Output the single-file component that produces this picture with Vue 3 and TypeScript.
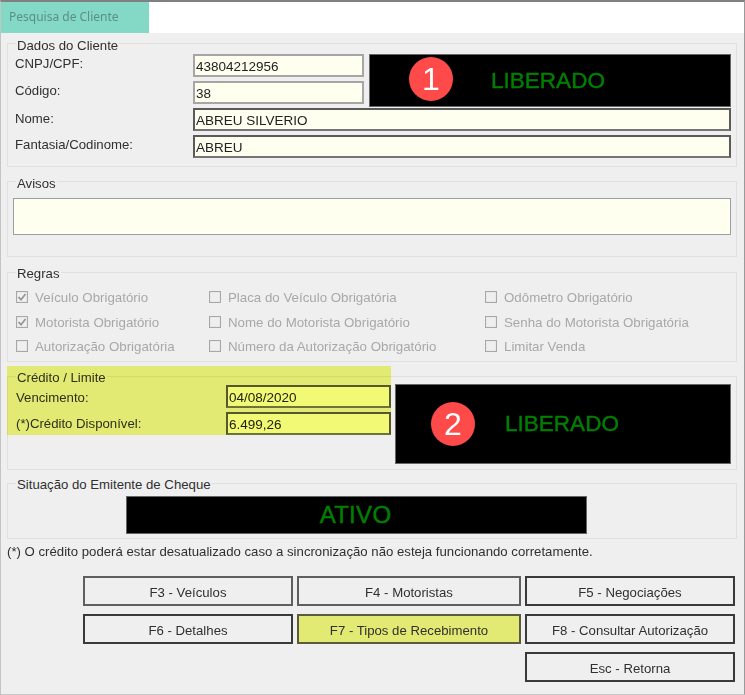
<script setup lang="ts">
interface Check { label: string; checked: boolean }
const checks: Check[] = [
  { label: 'Veículo Obrigatório', checked: true },
  { label: 'Placa do Veículo Obrigatória', checked: false },
  { label: 'Odômetro Obrigatório', checked: false },
  { label: 'Motorista Obrigatório', checked: true },
  { label: 'Nome do Motorista Obrigatório', checked: false },
  { label: 'Senha do Motorista Obrigatória', checked: false },
  { label: 'Autorização Obrigatória', checked: false },
  { label: 'Número da Autorização Obrigatório', checked: false },
  { label: 'Limitar Venda', checked: false },
]
const buttons = [
  { label: 'F3 - Veículos', cls: 'soft' },
  { label: 'F4 - Motoristas', cls: 'soft' },
  { label: 'F5 - Negociações', cls: '' },
  { label: 'F6 - Detalhes', cls: '' },
  { label: 'F7 - Tipos de Recebimento', cls: 'active' },
  { label: 'F8 - Consultar Autorização', cls: '' },
  { label: 'Esc - Retorna', cls: 'last' },
]
</script>

<template>
  <div class="win">
    <div class="tabbar"><div class="tab">Pesquisa de Cliente</div></div>

    <section class="group g-dados">
      <span class="legend">Dados do Cliente</span>
      <div class="dados-grid">
        <label class="lb up">CNPJ/CPF:</label>
        <div class="field light">43804212956</div>
        <div class="status s1"><span class="badge b1">1</span>LIBERADO</div>
        <label class="lb up">Código:</label>
        <div class="field light">38</div>
        <label class="lb">Nome:</label>
        <div class="field wide dark">ABREU SILVERIO</div>
        <label class="lb up">Fantasia/Codinome:</label>
        <div class="field wide dark">ABREU</div>
      </div>
    </section>

    <section class="group g-avisos">
      <span class="legend">Avisos</span>
      <div class="memo"></div>
    </section>

    <section class="group g-regras">
      <span class="legend raised">Regras</span>
      <div class="checks">
        <div v-for="c in checks" :key="c.label" class="chk">
          <svg class="box" width="12" height="12" viewBox="0 0 12 12">
            <rect x="0.5" y="0.5" width="11" height="11" fill="none" stroke="#a8a8a8" stroke-width="1.2" />
            <path v-if="c.checked" d="M2.5 6 L5 8.7 L9.5 3" fill="none" stroke="#949494" stroke-width="1.7" />
          </svg>
          <span class="chk-text">{{ c.label }}</span>
        </div>
      </div>
    </section>

    <section class="group g-credito">
      <span class="legend raised">Crédito / Limite</span>
      <div class="credito-grid">
        <label class="lb first">Vencimento:</label>
        <div class="field dark">04/08/2020</div>
        <div class="status s2"><span class="badge b2">2</span>LIBERADO</div>
        <label class="lb">(*)Crédito Disponível:</label>
        <div class="field dark">6.499,26</div>
      </div>
      <div class="marker"></div>
    </section>

    <section class="group g-situacao">
      <span class="legend">Situação do Emitente de Cheque</span>
      <div class="status s3">ATIVO</div>
    </section>

    <p class="note">(*) O crédito poderá estar desatualizado caso a sincronização não esteja funcionando corretamente.</p>

    <div class="buttons">
      <button v-for="b in buttons" :key="b.label" class="btn" :class="b.cls">{{ b.label }}</button>
    </div>
  </div>
</template>

<style scoped>
.win {
  position: relative;
  width: 745px;
  height: 695px;
  box-sizing: border-box;
  overflow: hidden;
  background: #efefef;
  border-top: 2px solid #808080;
  border-left: 1px solid #c4c4c4;
  border-right: 1px solid #9a9a9a;
  border-bottom: 1px solid #c8c8c8;
  font-family: "Liberation Sans", Arial, sans-serif;
  font-size: 13.2px;
  color: #303030;
}
.tabbar { height: 31px; background: #fff; }
.tab {
  width: 148px;
  height: 31px;
  line-height: 30px;
  padding-left: 8px;
  box-sizing: border-box;
  background: #84d8c6;
  color: #5c8f86;
  font-family: "Noto Sans", sans-serif;
  font-size: 12px;
}
.group {
  position: relative;
  box-sizing: border-box;
  width: 730px;
  margin-left: 6px;
  border: 1px solid #e0e0e0;
}
.legend {
  position: absolute;
  left: 8px;
  top: -6px;
  padding: 0 1px;
  line-height: 16px;
  background: #efefef;
  white-space: nowrap;
}
.legend.raised { top: -7px; }
.g-situacao .legend { top: -7px; }

.g-dados { margin-top: 10px; height: 124px; padding: 10px 0 0 7px; }
.dados-grid {
  display: grid;
  grid-template-columns: 178px 171px 367px;
  grid-auto-rows: 27px;
}
.lb { align-self: start; white-space: nowrap; line-height: 16px; margin-top: 3px; }
.lb.up { margin-top: 2px; }
.field {
  box-sizing: border-box;
  height: 23px;
  padding-left: 1px;
  background: #fffff0;
  color: #222;
  font-size: 13.5px;
  line-height: 21px;
  white-space: nowrap;
}
.field.light { border: 2px solid #a6a6a6; }
.field.dark { border: 2px solid #5a5a5a; border-bottom-color: #757575; }
.field.wide { grid-column: 2 / 4; width: 538px; }
.status {
  position: relative;
  box-sizing: border-box;
  display: flex;
  align-items: center;
  justify-content: center;
  background: #000;
  border: 1px solid #666;
  color: #008000;
  font-size: 22.5px;
  -webkit-text-stroke: 0.4px #008000;
}
.s1 { grid-column: 3; grid-row: 1 / 3; width: 362px; height: 53px; margin-left: 5px; padding-right: 4px; }
.s2 { grid-column: 3; grid-row: 1 / 4; width: 336px; height: 80px; margin-left: 4px; padding-right: 2px; }
.s3 { width: 461px; height: 38px; margin-left: 118px; font-size: 24px; letter-spacing: 0.3px; padding-right: 2px; }
.badge {
  position: absolute;
  width: 44px;
  height: 44px;
  border-radius: 50%;
  background: #ff4a4a;
  color: #fff;
  font-size: 32px;
  line-height: 44px;
  text-align: center;
  -webkit-text-stroke: 0;
}
.b1 { left: 39px; top: 2px; }
.b2 { left: 35px; top: 17px; }

.g-avisos { margin-top: 14px; height: 76px; padding: 16px 0 0 5px; }
.memo {
  box-sizing: border-box;
  width: 718px;
  height: 37px;
  background: #fffff0;
  border: 1px solid #9aa0a8;
}

.g-regras { margin-top: 15px; height: 90px; padding: 18px 0 0 8px; }
.checks {
  display: grid;
  grid-template-columns: 193px 276px 1fr;
  grid-auto-rows: 24.5px;
}
.chk { display: flex; align-items: flex-start; color: #a8a8a8; white-space: nowrap; line-height: 12px; font-size: 13.3px; }
.chk-text { padding-top: 1px; }
.box { flex: none; margin-right: 7px; }

.g-credito { margin-top: 14px; height: 94px; padding: 7px 0 0 8px; }
.credito-grid {
  display: grid;
  grid-template-columns: 210px 165px 340px;
  grid-auto-rows: 27px;
}
.credito-grid .lb { margin-top: 5px; }
.credito-grid .lb.first { margin-top: 6px; }
.credito-grid .field { margin-top: 1px; }
.marker {
  position: absolute;
  left: -1px;
  top: -11px;
  width: 384px;
  height: 69px;
  background: #f2fa7c;
  mix-blend-mode: multiply;
  pointer-events: none;
}

.g-situacao { margin-top: 13px; height: 56px; padding-top: 12px; }
.note {
  margin: 5px 0 0 6px;
  line-height: 16px;
  white-space: nowrap;
}
.buttons {
  display: grid;
  grid-template-columns: 210px 224px 210px;
  grid-auto-rows: 30px;
  gap: 8px 4px;
  margin: 16px 0 0 82px;
}
.btn {
  box-sizing: border-box;
  background: #efefef;
  border: 2px solid #3a3a3a;
  border-radius: 0;
  padding: 2px 0 0;
  font: inherit;
  color: #303030;
}
.btn.soft { border-color: #5f5f5f; }
.btn.active { background: #e3ea74; border-color: #5a5a40; }
.btn.last { grid-column: 3; }
</style>

<style>
html, body { margin: 0; background: #efefef; }
</style>
